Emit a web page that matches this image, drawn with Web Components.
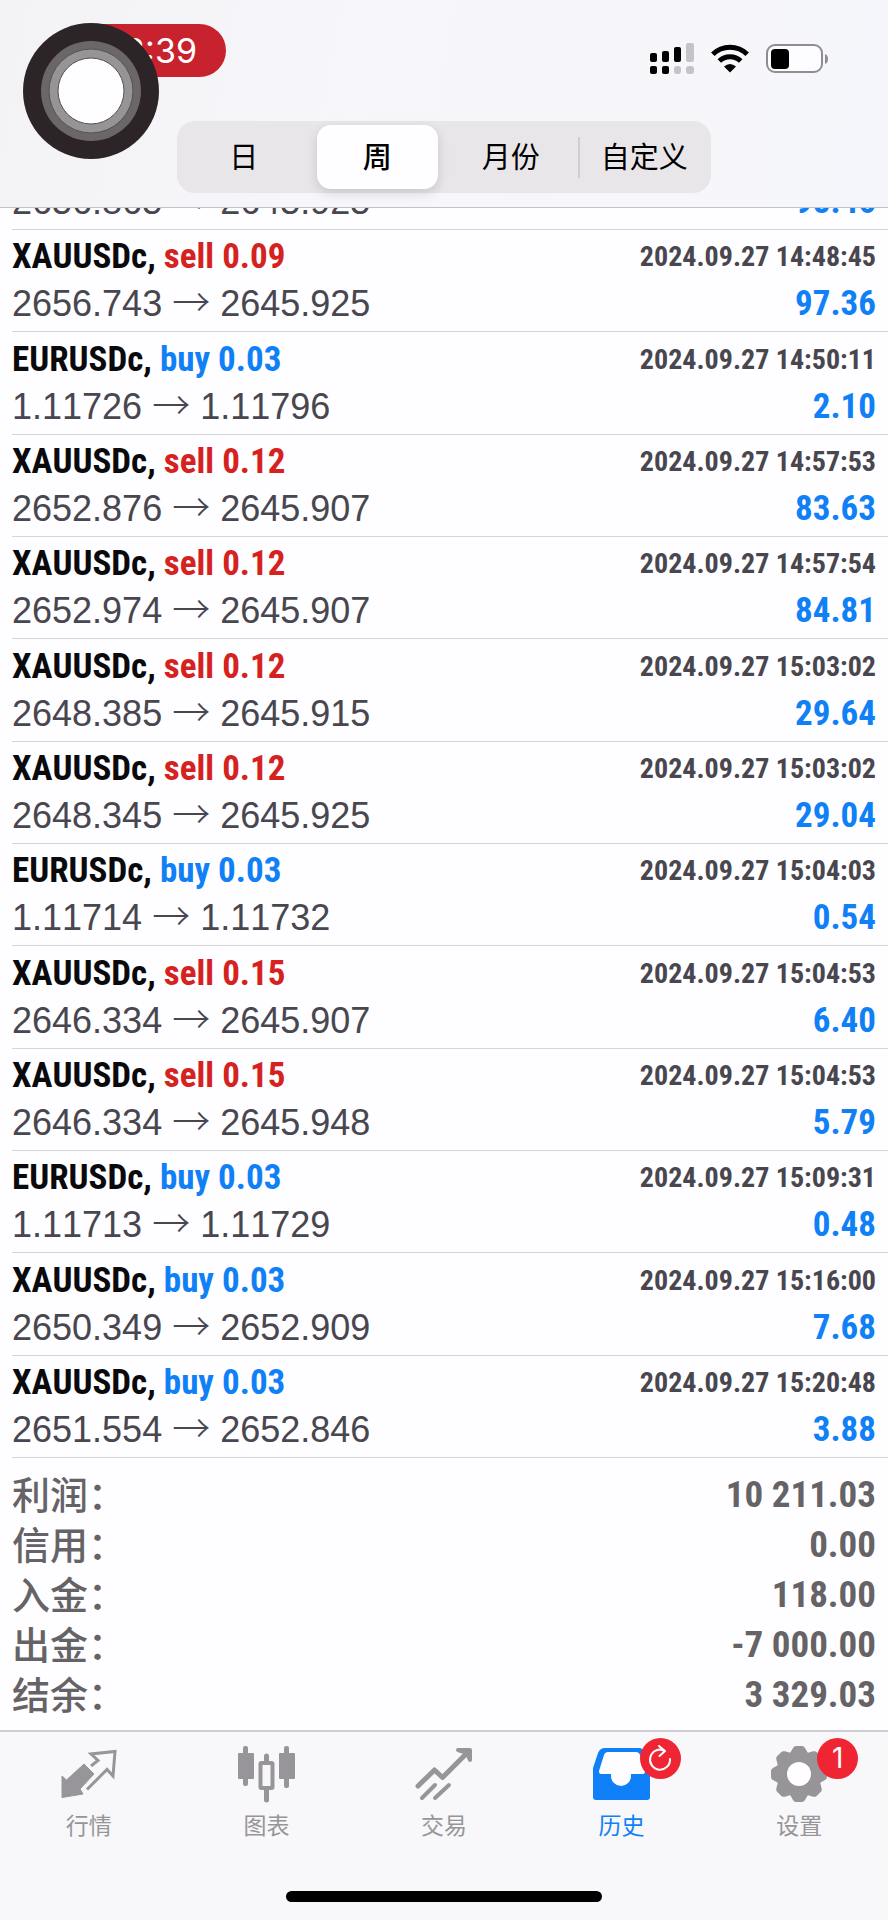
<!DOCTYPE html>
<html lang="zh-CN">
<head>
<meta charset="utf-8">
<title>历史</title>
<meta name="viewport" content="width=device-width, initial-scale=1">
<style>
    body {
        margin: 0;
        background: #fefdff;
        font-family: "Liberation Sans", "Noto Sans CJK SC", sans-serif;
    }
</style>
</head>
<body>
<history-app></history-app>

<script>
// Closed orders of the selected period
const deals = [
    ['XAUUSDc', 'sell', '0.09', '2656.743', '2645.925', '2024.09.27 14:48:45', '97.36'],
    ['EURUSDc', 'buy', '0.03', '1.11726', '1.11796', '2024.09.27 14:50:11', '2.10'],
    ['XAUUSDc', 'sell', '0.12', '2652.876', '2645.907', '2024.09.27 14:57:53', '83.63'],
    ['XAUUSDc', 'sell', '0.12', '2652.974', '2645.907', '2024.09.27 14:57:54', '84.81'],
    ['XAUUSDc', 'sell', '0.12', '2648.385', '2645.915', '2024.09.27 15:03:02', '29.64'],
    ['XAUUSDc', 'sell', '0.12', '2648.345', '2645.925', '2024.09.27 15:03:02', '29.04'],
    ['EURUSDc', 'buy', '0.03', '1.11714', '1.11732', '2024.09.27 15:04:03', '0.54'],
    ['XAUUSDc', 'sell', '0.15', '2646.334', '2645.907', '2024.09.27 15:04:53', '6.40'],
    ['XAUUSDc', 'sell', '0.15', '2646.334', '2645.948', '2024.09.27 15:04:53', '5.79'],
    ['EURUSDc', 'buy', '0.03', '1.11713', '1.11729', '2024.09.27 15:09:31', '0.48'],
    ['XAUUSDc', 'buy', '0.03', '2650.349', '2652.909', '2024.09.27 15:16:00', '7.68'],
    ['XAUUSDc', 'buy', '0.03', '2651.554', '2652.846', '2024.09.27 15:20:48', '3.88']
];

// Only the prices of this one are still below the header
const scrolledDeal = ['', '', '', '2656.865', '2645.925', '', '98.46'];

const totals = [
    ['利润', '10 211.03'],
    ['信用', '0.00'],
    ['入金', '118.00'],
    ['出金', '-7 000.00'],
    ['结余', '3 329.03']
];

class StatusBar extends HTMLElement {
    constructor() {
        super();
        this.attachShadow({ mode: 'open' });
    }

    connectedCallback() {
        this.shadowRoot.innerHTML = `
            <style>
                :host {
                    display: flex;
                    justify-content: space-between;
                    align-items: flex-start;
                    height: 97px;
                    padding: 24px 60px 0 76px;
                }
                .clock {
                    box-sizing: border-box;
                    width: 150px;
                    height: 53px;
                    padding-right: 29px;
                    border-radius: 27px;
                    background: #c9222f;
                    color: #fff;
                    font: 34px/53px Inter, sans-serif;
                    text-align: right;
                }
                .icons {
                    display: flex;
                    align-items: center;
                    gap: 17px;
                    padding-top: 19px;
                }
                svg {
                    display: block;
                }
            </style>
            <div class="clock">8:39</div>
            <div class="icons">
                <svg width="44" height="31" viewBox="0 0 44 31">
                    <rect x="0" y="10" width="7" height="9" rx="2"/>
                    <rect x="12" y="8" width="7" height="11" rx="2"/>
                    <rect x="24" y="4" width="7" height="15" rx="2"/>
                    <rect x="36" y="0" width="8" height="19" rx="2" fill="#c5c3c7"/>
                    <rect x="0" y="23" width="7" height="8" rx="2"/>
                    <rect x="12" y="23" width="7" height="8" rx="2"/>
                    <rect x="24" y="23" width="7" height="8" rx="3" fill="#c5c3c7"/>
                    <rect x="36" y="23" width="8" height="8" rx="3" fill="#c5c3c7"/>
                </svg>
                <svg width="38" height="29" viewBox="0 0 38 29">
                    <path d="M1.800 10.200A24.500 24.500 0 0 1 36.200 10.200M8.300 17A15.300 15.300 0 0 1 29.700 17" fill="none" stroke="#000" stroke-width="5"/>
                    <path d="M13 22.500Q19 17.500 25 22.500L19 28.500Z"/>
                </svg>
                <svg width="62" height="30" viewBox="0 0 62 30">
                    <rect x="1" y="1" width="55" height="27" rx="8" fill="#fdfcfe" stroke="#8f8d92" stroke-width="2"/>
                    <rect x="5" y="5" width="18" height="20" rx="4"/>
                    <path d="M59 10Q62 11 62 15Q62 19 59 20Z" fill="#8f8d92"/>
                </svg>
            </div>
        `;
    }
}

// Floating accessibility button that sits over the page
class AssistiveTouch extends HTMLElement {
    constructor() {
        super();
        this.attachShadow({ mode: 'open' });
    }

    connectedCallback() {
        this.shadowRoot.innerHTML = `
            <style>
                :host {
                    position: absolute;
                    top: 23px;
                    left: 23px;
                }
                button {
                    display: block;
                    padding: 0;
                    border: none;
                    border-radius: 50%;
                    background: none;
                }
                svg {
                    display: block;
                }
            </style>
            <button type="button" aria-label="AssistiveTouch">
                <svg width="136" height="136" viewBox="0 0 136 136">
                    <circle cx="68" cy="68" r="68" fill="#2c2427"/>
                    <circle cx="68" cy="68" r="50" fill="#6b6668"/>
                    <circle cx="68" cy="68" r="42" fill="#979495" stroke="#575254"/>
                    <circle cx="68" cy="68" r="33" fill="#fefdff" stroke="#575254"/>
                </svg>
            </button>
        `;
    }
}

class PeriodPicker extends HTMLElement {
    constructor() {
        super();
        this.attachShadow({ mode: 'open' });
    }

    connectedCallback() {
        this.shadowRoot.innerHTML = `
            <style>
                :host {
                    display: grid;
                    grid-template-columns: repeat(4, 1fr);
                    box-sizing: border-box;
                    width: 60%;
                    min-width: 534px;
                    height: 72px;
                    margin: 0 auto;
                    padding: 4px 0;
                    border-radius: 18px;
                    background: #e8e6e9;
                }
                button {
                    margin: 0 6px;
                    padding: 0 0 4px;
                    border: none;
                    border-radius: 14px;
                    background: none;
                    color: #000;
                    font: 29px/60px "Noto Sans CJK SC", sans-serif;
                    white-space: nowrap;
                }
                button[aria-pressed="true"] {
                    background: #fefdff;
                    box-shadow: 0 4px 12px rgba(0, 0, 0, 0.14);
                    font-weight: 500;
                }
                .divided {
                    margin: 0;
                    background: linear-gradient(#cfcdd1, #cfcdd1) left center / 2px 41px no-repeat;
                    border-radius: 0;
                }
            </style>
            <button type="button">日</button>
            <button type="button" aria-pressed="true">周</button>
            <button type="button">月份</button>
            <button type="button" class="divided">自定义</button>
        `;

        this.shadowRoot.querySelectorAll('button').forEach((button) => {
            button.addEventListener('click', () => this.select(button));
        });
    }

    select(button) {
        this.shadowRoot.querySelectorAll('button').forEach((b) => {
            b.setAttribute('aria-pressed', b === button);
        });
    }
}

class DealRow extends HTMLElement {
    constructor() {
        super();
        this.attachShadow({ mode: 'open' });
    }

    connectedCallback() {
        const [symbol, side, volume, open, close, time, profit] = this.deal;
        this.shadowRoot.innerHTML = `
            <style>
                :host {
                    display: flex;
                    flex-direction: column;
                    justify-content: flex-end;
                    box-sizing: border-box;
                    margin-left: 12px;
                    padding: 0 12px 4px 0;
                    border-bottom: 1px solid #d6d4d9;
                    font-kerning: none;
                }
                .line {
                    display: flex;
                    justify-content: space-between;
                    align-items: center;
                    height: 47px;
                    line-height: 47px;
                    white-space: nowrap;
                }
                .title, .time, .profit {
                    font-family: "Roboto Condensed", "Liberation Sans", sans-serif;
                    font-weight: bold;
                }
                .title {
                    color: #0a0a0c;
                    font-size: 35px;
                }
                .sell {
                    color: #d6221f;
                }
                .buy, .profit {
                    color: #0f80f5;
                }
                .time {
                    color: #48464e;
                    font-size: 28px;
                }
                .prices {
                    color: #48464e;
                    font-size: 36px;
                }
                .arrow {
                    font-family: "Noto Sans CJK SC", sans-serif;
                    font-size: 38px;
                    font-weight: 300;
                    line-height: 1;
                }
                .profit {
                    font-size: 35px;
                }
            </style>
            ${symbol ? `
            <div class="line">
                <span class="title">${symbol}, <span class="${side}">${side} ${volume}</span></span>
                <time class="time">${time}</time>
            </div>` : ''}
            <div class="line">
                <span class="prices">${open} <span class="arrow">→</span> ${close}</span>
                <span class="profit">${profit}</span>
            </div>
        `;
    }
}

class DealList extends HTMLElement {
    constructor() {
        super();
        this.attachShadow({ mode: 'open' });
    }

    connectedCallback() {
        this.shadowRoot.innerHTML = `
            <style>
                :host {
                    display: grid;
                    grid-template-rows: 22px;
                    grid-auto-rows: 1fr;
                    overflow: hidden;
                }
                .scrolled {
                    align-self: end;
                }
            </style>
        `;
        this.addRow(scrolledDeal).className = 'scrolled';
        deals.forEach((deal) => this.addRow(deal));
    }

    addRow(deal) {
        const row = document.createElement('deal-row');
        row.deal = deal;
        return this.shadowRoot.appendChild(row);
    }
}

class AccountTotals extends HTMLElement {
    constructor() {
        super();
        this.attachShadow({ mode: 'open' });
    }

    connectedCallback() {
        this.shadowRoot.innerHTML = `
            <style>
                :host {
                    display: block;
                    padding: 12px 12px 10px;
                }
                dl {
                    display: grid;
                    grid-template-columns: auto 1fr;
                    grid-auto-rows: 50px;
                    margin: 0;
                    color: #656366;
                }
                dt {
                    font: 500 38px/46px "Noto Sans CJK SC", sans-serif;
                }
                dd {
                    margin: 0;
                    font: bold 37px/50px "Roboto Condensed", "Liberation Sans", sans-serif;
                    font-kerning: none;
                    text-align: right;
                }
            </style>
            <dl>
                ${totals.map(([name, value]) => `<dt>${name}：</dt><dd>${value}</dd>`).join('')}
            </dl>
        `;
    }
}

// One tab: icon in the default slot, badge content in its own slot
class TabItem extends HTMLElement {
    constructor() {
        super();
        this.attachShadow({ mode: 'open' });
    }

    connectedCallback() {
        this.shadowRoot.innerHTML = `
            <style>
                :host {
                    display: flex;
                    flex: 1;
                    justify-content: center;
                    color: #979599;
                }
                :host([active]) {
                    color: #0f80f8;
                }
                a {
                    display: flex;
                    flex-direction: column;
                    align-items: center;
                    color: inherit;
                    text-decoration: none;
                    font: 23px/32px "Noto Sans CJK SC", sans-serif;
                }
                .icon {
                    position: relative;
                    height: 60px;
                }
                ::slotted([slot="badge"]) {
                    position: absolute;
                    top: -10px;
                    left: 47px;
                    width: 41px;
                    height: 41px;
                    border-radius: 50%;
                    background: #ef2533;
                    color: #fff;
                    font: 28px/41px Inter, sans-serif;
                    text-align: center;
                }
            </style>
            <a href="#${this.getAttribute('name')}">
                <span class="icon"><slot></slot><slot name="badge"></slot></span>
                <span>${this.getAttribute('label')}</span>
            </a>
        `;
    }
}

class TabBar extends HTMLElement {
    constructor() {
        super();
        this.attachShadow({ mode: 'open' });
    }

    connectedCallback() {
        this.shadowRoot.innerHTML = `
            <style>
                :host {
                    display: block;
                    border-top: 2px solid #cfcdd1;
                    background: #f8f7fa;
                }
                nav {
                    display: flex;
                    padding-top: 16px;
                }
                svg {
                    display: block;
                    overflow: visible;
                }
                .home {
                    width: 316px;
                    height: 11px;
                    margin: 51px auto 18px;
                    border-radius: 6px;
                    background: #000;
                }
            </style>
            <nav>
                <tab-item name="quotes" label="行情">
                    <svg width="58" height="58" viewBox="0 0 58 58" fill="currentColor">
                        <path d="M24 16L34 26L20 41L23 46L2 49.500V28L6.500 32Z" stroke="currentColor" stroke-linejoin="round"/>
                        <path d="M27 41.500L47 21.500L53 28L55 3.500L31 6L38 12.500L31 18" fill="none" stroke="currentColor" stroke-width="3"/>
                    </svg>
                </tab-item>
                <tab-item name="chart" label="图表">
                    <svg width="58" height="58" viewBox="0 0 58 58" fill="currentColor">
                        <rect x="1" y="5" width="16" height="26" rx="1"/>
                        <rect x="6" y="-2" width="5" height="40" rx="2"/>
                        <rect x="42" y="5" width="16" height="26" rx="1"/>
                        <rect x="47" y="-2" width="5" height="42" rx="2"/>
                        <path d="M27 13V8a2.500 2.500 0 0 1 5 0V13ZM27 42V52a2.500 2.500 0 0 0 5 0V42Z"/>
                        <rect x="23.500" y="15" width="12" height="25" rx="1" fill="none" stroke="currentColor" stroke-width="4"/>
                    </svg>
                </tab-item>
                <tab-item name="trade" label="交易">
                    <svg width="58" height="58" viewBox="0 0 58 58" fill="none" stroke="currentColor" stroke-width="4" stroke-linecap="round" stroke-linejoin="round">
                        <path d="M3 38L19.500 22L27.500 29.500L54 3" stroke-width="5"/>
                        <path d="M43 2H55V12L52 5Z" fill="currentColor"/>
                        <path d="M7 50L20 37M20 50L34 37"/>
                    </svg>
                </tab-item>
                <tab-item name="history" label="历史" active>
                    <svg width="58" height="58" viewBox="0 0 58 58">
                        <path d="M12 0H46Q50 0 52 5L57 20V49Q57 52 54 52H3Q0 52 0 49V20L5 5Q7 0 12 0Z" fill="currentColor"/>
                        <path d="M15 4H43Q46 4 47 7L52 23Q52 26 50 26H38V28A10 10 0 0 1 18 28V26H8Q6 26 6 23L11 7Q12 4 15 4Z" fill="#fefdff"/>
                    </svg>
                    <span slot="badge">
                        <svg width="41" height="41" viewBox="0 0 41 41" fill="none" stroke="#fff" stroke-width="2" stroke-linecap="round" stroke-linejoin="round">
                            <path d="M30 21A10 10 0 1 1 24 12.500M19 8L25 13L19.500 18"/>
                        </svg>
                    </span>
                </tab-item>
                <tab-item name="settings" label="设置">
                    <svg width="58" height="58" viewBox="0 0 58 58">
                        <g transform="translate(29 26)" fill="currentColor">
                            <circle r="23"/>
                            <path id="tooth" d="M-10 -19L-6 -26Q-5 -28 -3 -28H3Q5 -28 6 -26L10 -19Z"/>
                            <use href="#tooth" transform="rotate(45)"/>
                            <use href="#tooth" transform="rotate(90)"/>
                            <use href="#tooth" transform="rotate(135)"/>
                            <use href="#tooth" transform="rotate(180)"/>
                            <use href="#tooth" transform="rotate(225)"/>
                            <use href="#tooth" transform="rotate(270)"/>
                            <use href="#tooth" transform="rotate(315)"/>
                            <circle r="12" fill="#fefdff"/>
                        </g>
                    </svg>
                    <span slot="badge">1</span>
                </tab-item>
            </nav>
            <div class="home"></div>
        `;
    }
}

class HistoryApp extends HTMLElement {
    constructor() {
        super();
        this.attachShadow({ mode: 'open' });
    }

    connectedCallback() {
        this.shadowRoot.innerHTML = `
            <style>
                :host {
                    position: relative;
                    display: flex;
                    flex-direction: column;
                    min-height: 100vh;
                }
                header {
                    padding-bottom: 14px;
                    border-bottom: 1px solid #c4c2c6;
                    background: linear-gradient(100deg, #f3f2f5, #f7f6fa 40%, #f5f6fb);
                }
                deal-list {
                    flex: 1;
                }
            </style>
            <header>
                <status-bar></status-bar>
                <period-picker></period-picker>
            </header>
            <deal-list></deal-list>
            <account-totals></account-totals>
            <tab-bar></tab-bar>
            <assistive-touch></assistive-touch>
        `;
    }
}

customElements.define('status-bar', StatusBar);
customElements.define('assistive-touch', AssistiveTouch);
customElements.define('period-picker', PeriodPicker);
customElements.define('deal-row', DealRow);
customElements.define('deal-list', DealList);
customElements.define('account-totals', AccountTotals);
customElements.define('tab-item', TabItem);
customElements.define('tab-bar', TabBar);
customElements.define('history-app', HistoryApp);
</script>
</body>
</html>
